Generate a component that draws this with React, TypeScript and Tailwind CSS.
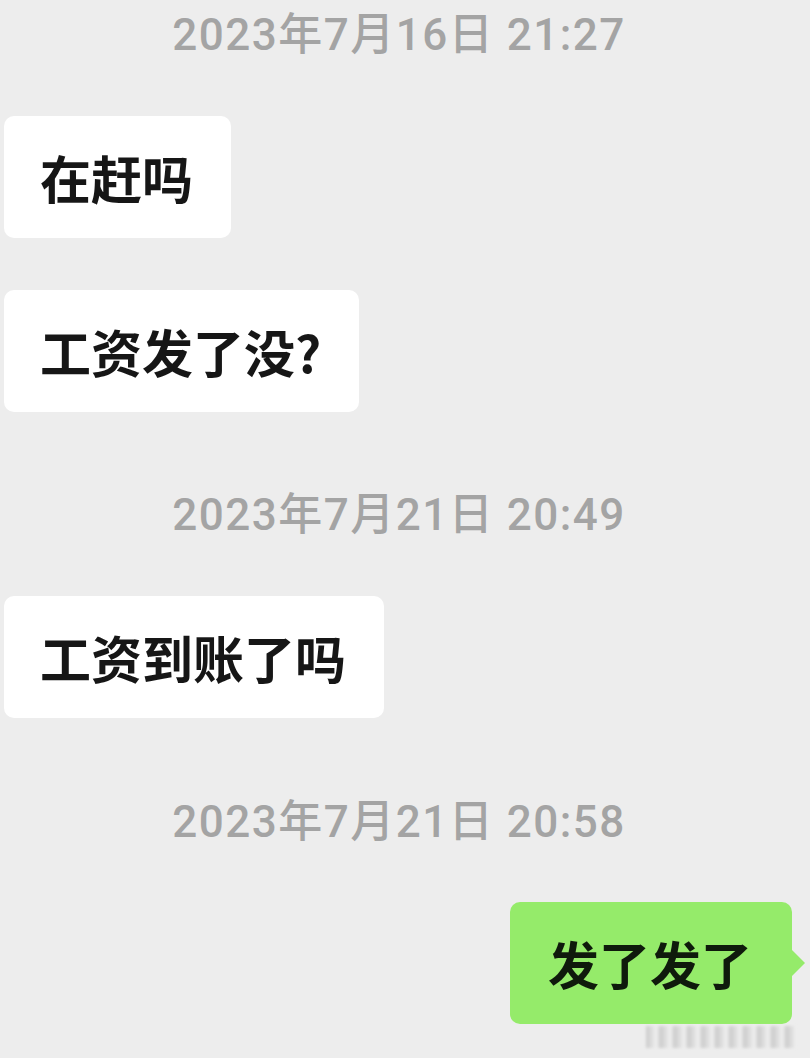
const msgFont = {
  fontFamily: '"Noto Sans CJK SC", "Noto Sans", sans-serif',
};

function Stamp({ text, className = "" }: { text: string; className?: string }) {
  return (
    <div
      className={`flex h-[70px] items-center justify-center pr-[12px] text-[44px] font-medium tracking-[1.5px] text-[#a4a4a4] ${className}`}
      style={{ fontFamily: 'Roboto, "Noto Sans CJK SC", sans-serif' }}
    >
      {text}
    </div>
  );
}

function Left({ text, className = "" }: { text: string; className?: string }) {
  return (
    <div className={`flex ${className}`}>
      <div
        className="ml-1 flex h-[122px] items-center rounded-[10px] bg-white pl-9 pr-[38px] text-[51px] font-semibold leading-none text-[#161616]"
        style={msgFont}
      >
        {text}
      </div>
    </div>
  );
}

export default function App() {
  return (
    <div className="h-[1058px] w-[810px] overflow-hidden bg-[#ededed]">
      <Stamp text="2023年7月16日 21:27" />
      <Left text="在赶吗" className="mt-[46px]" />
      <Left text="工资发了没?" className="mt-[52px]" />
      <Stamp text="2023年7月21日 20:49" className="mt-[68px]" />
      <Left text="工资到账了吗" className="mt-[46px]" />
      <Stamp text="2023年7月21日 20:58" className="mt-[69px]" />

      <div className="mt-[45px] flex justify-end pr-[18px]">
        <div className="relative">
          <div
            className="flex h-[122px] items-center rounded-[10px] bg-[#95eb6a] pl-[38px] pr-[40px] text-[51px] font-semibold leading-none text-[#0f1a0c]"
            style={msgFont}
          >
            发了发了
          </div>
          {/* tail */}
          <div className="absolute right-[-13px] top-[47px] h-0 w-0 border-y-[14px] border-l-[14px] border-y-transparent border-l-[#95eb6a]" />
        </div>
      </div>

      {/* blurred watermark */}
      <div className="flex justify-end pr-[14px]">
        <div className="mt-[2px] h-[22px] w-[150px] bg-[repeating-linear-gradient(90deg,#bdbdbd_0px,#d8d8d8_6px,#f3f3f3_10px,#c9c9c9_14px)] opacity-70 blur-[1.5px]" />
      </div>
    </div>
  );
}
